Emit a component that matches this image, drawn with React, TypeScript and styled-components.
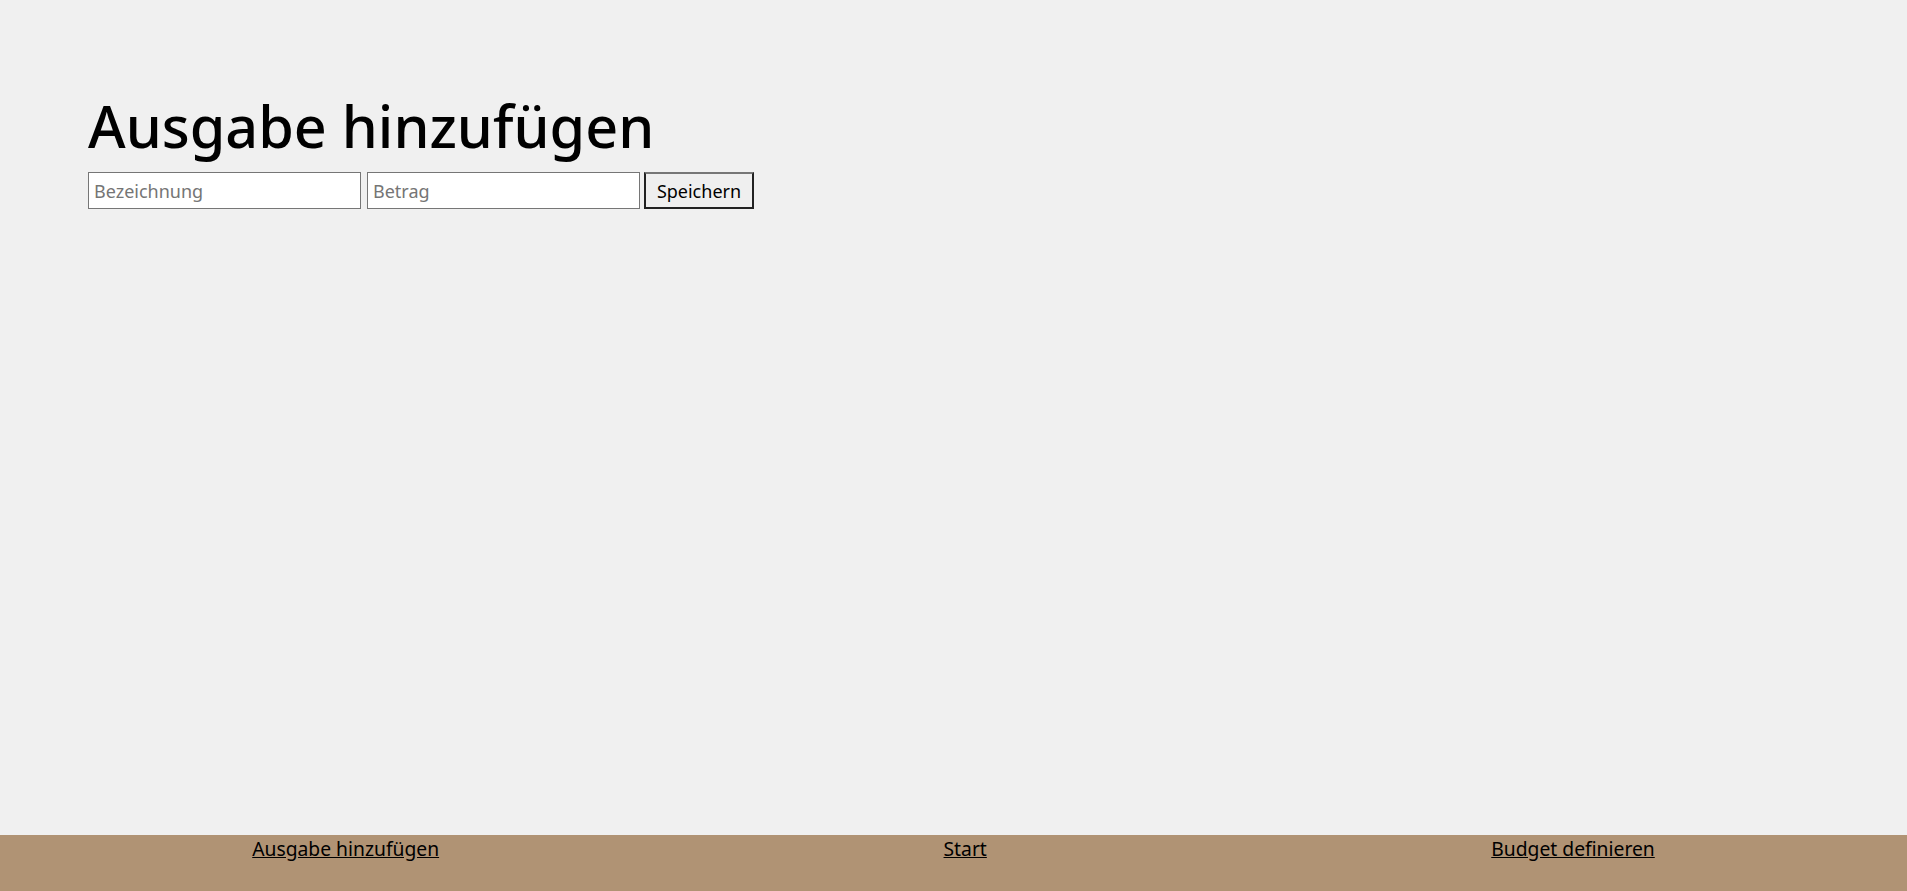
import React from "react";
import styled, { createGlobalStyle } from "styled-components";

const GlobalStyle = createGlobalStyle`
  html, body {
    margin: 0;
    padding: 0;
    background: #f0f0f0;
    font-family: "Noto Sans", "Open Sans", sans-serif;
  }
`;

const Page = styled.div`
  min-height: 891px;
  display: flex;
  flex-direction: column;
`;

const Main = styled.main`
  flex: 1;
  padding: 87px 88px 0;
`;

const Title = styled.h1`
  margin: 0 0 7px;
  font-size: 57.5px;
  font-weight: 500;
  line-height: 78px;
  color: #000;
`;

const Form = styled.form`
  display: flex;
  gap: 6px;
  align-items: stretch;
`;

const Input = styled.input`
  box-sizing: border-box;
  width: 273px;
  height: 37px;
  padding: 0 5px;
  border: 1px solid #767676;
  border-radius: 0;
  background: #fff;
  font-family: inherit;
  font-size: 18px;
  color: #000;
  &::placeholder {
    color: #757575;
  }
`;

const Button = styled.button`
  box-sizing: border-box;
  width: 110px;
  height: 37px;
  margin-left: -2px;
  padding: 0;
  border: 2px solid #222;
  border-top-color: #767676;
  background: #efefef;
  font-family: inherit;
  font-size: 18px;
  color: #000;
`;

const Footer = styled.footer`
  height: 56px;
  background: #b09374;
  display: flex;
  justify-content: space-around;
  align-items: flex-start;
`;

const NavLink = styled.a`
  color: #000;
  font-size: 19.3px;
  line-height: 28px;
  text-decoration: underline;
`;

export default function App() {
  return (
    <Page>
      <GlobalStyle />
      <Main>
        <Title>Ausgabe hinzufügen</Title>
        <Form onSubmit={(e) => e.preventDefault()}>
          <Input placeholder="Bezeichnung" />
          <Input placeholder="Betrag" />
          <Button type="submit">Speichern</Button>
        </Form>
      </Main>
      <Footer>
        <NavLink href="#">Ausgabe hinzufügen</NavLink>
        <NavLink href="#">Start</NavLink>
        <NavLink href="#">Budget definieren</NavLink>
      </Footer>
    </Page>
  );
}
